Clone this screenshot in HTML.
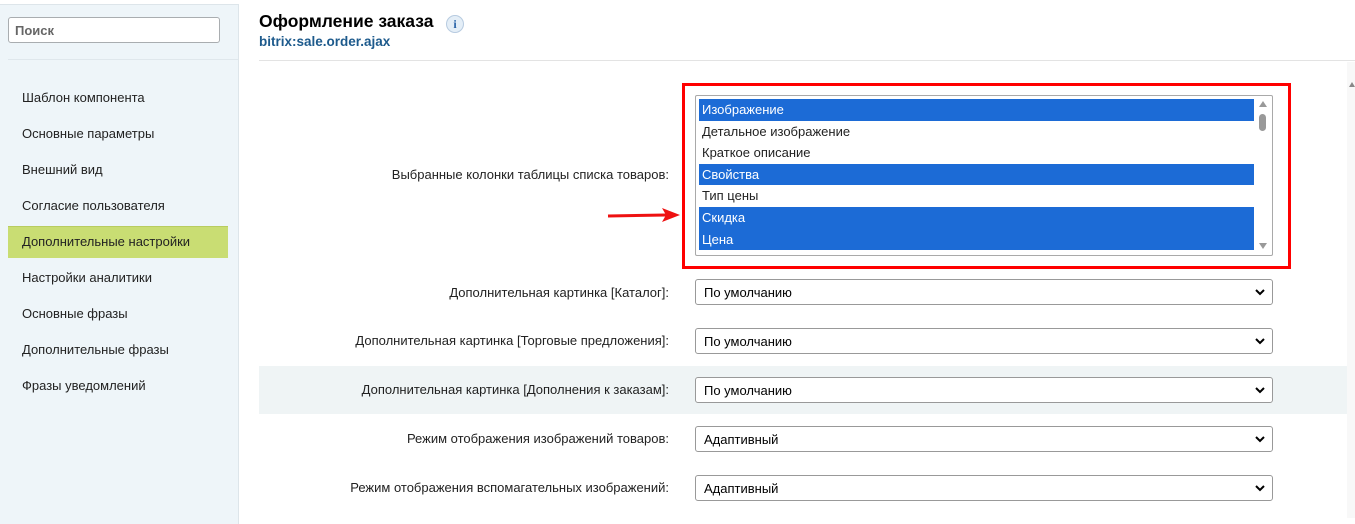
<!DOCTYPE html>
<html><head><meta charset="utf-8"><style>
*{box-sizing:border-box;margin:0;padding:0}
body{width:1355px;height:518px;overflow:hidden;background:#fff;font-family:"Liberation Sans",Arial,sans-serif;font-size:13px;color:#000;position:relative}
.side{position:absolute;left:0;top:4px;width:239px;height:520px;background:#eef5f9;border-right:1px solid #dde5ea;border-top:1px solid #dde5ea}
.search{position:absolute;left:8px;top:12px;width:212px;height:26px;background:#fff;border:1px solid #a9adb0;border-radius:3px;font-size:13px;color:#666;padding:5px 6px;font-weight:bold}
.sdiv{position:absolute;left:8px;top:54px;width:230px;height:1px;background:#dfe7ec}
.mi{position:absolute;left:22px;font-size:13px;color:#222}
.hl{position:absolute;left:8px;top:221px;width:220px;height:32px;background:#c9dd73;border-top:1px solid #b8cc60}
.abs{position:absolute}
.lbl{position:absolute;right:686px;font-size:13px;color:#222;white-space:nowrap}
.sel{position:absolute;left:695px;width:578px;height:26px;border:1px solid #999;border-radius:3px;background:#fff;padding:5px 8px;font-size:13px}
.sel svg{position:absolute;right:7px;top:8px}
.opt{height:21.6px;line-height:21.6px;padding-left:3px;font-size:13px;color:#222}
.on{background:#1c6bd6;color:#fff}
</style></head><body>
<div class="side">
<div class="search">Поиск</div>
<div class="sdiv"></div>
<div class="hl"></div>
<div class="mi" style="top:85px">Шаблон компонента</div>
<div class="mi" style="top:121px">Основные параметры</div>
<div class="mi" style="top:157px">Внешний вид</div>
<div class="mi" style="top:193px">Согласие пользователя</div>
<div class="mi" style="top:229px">Дополнительные настройки</div>
<div class="mi" style="top:265px">Настройки аналитики</div>
<div class="mi" style="top:301px">Основные фразы</div>
<div class="mi" style="top:337px">Дополнительные фразы</div>
<div class="mi" style="top:373px">Фразы уведомлений</div>
</div>
<div class="abs" style="left:259px;top:11px;font-size:17.5px;font-weight:bold;color:#000">Оформление заказа</div>
<div class="abs" style="left:446px;top:15px;width:18px;height:18px;border-radius:50%;background:#e4eef7;border:1px solid #b7cbe0;color:#2a64a8;font:bold 12px 'Liberation Serif',serif;text-align:center;line-height:16px">i</div>
<div class="abs" style="left:259px;top:34px;font-size:13.5px;font-weight:bold;color:#1d5a8c">bitrix:sale.order.ajax</div>
<div class="abs" style="left:259px;top:60px;width:1096px;height:1px;background:#e3e3e3"></div>
<div class="abs" style="left:1347px;top:62px;width:8px;height:456px;background:#f8f8f8"></div>
<div class="abs" style="left:1349px;top:82px;width:0;height:0;border-left:3px solid transparent;border-right:3px solid transparent;border-bottom:5px solid #888"></div>
<div class="abs" style="left:259px;top:366px;width:1088px;height:48px;background:#eff4f5"></div>

<div class="lbl" style="top:167px">Выбранные колонки таблицы списка товаров:</div>
<div class="abs" style="left:682px;top:83px;width:609px;height:186px;border:3px solid #f00"></div>
<div class="abs" style="left:695px;top:95px;width:578px;height:161px;border:1px solid #a9a9a9;border-radius:2px;background:#fff;padding:3px 18px 0 3px">
<div class="opt on">Изображение</div>
<div class="opt">Детальное изображение</div>
<div class="opt">Краткое описание</div>
<div class="opt on">Свойства</div>
<div class="opt">Тип цены</div>
<div class="opt on">Скидка</div>
<div class="opt on">Цена</div>
<div class="abs" style="right:5px;top:5px;border-left:4px solid transparent;border-right:4px solid transparent;border-bottom:6px solid #999"></div>
<div class="abs" style="right:6px;top:18px;width:7px;height:17px;border-radius:4px;background:#999"></div>
<div class="abs" style="right:5px;bottom:6px;border-left:4px solid transparent;border-right:4px solid transparent;border-top:6px solid #999"></div>
</div>
<svg class="abs" style="left:606px;top:207px" width="76" height="16"><line x1="2" y1="9" x2="60" y2="8" stroke="#e11" stroke-width="3"/><polygon points="56,1 74,8 56,15 60,8" fill="#e11"/></svg>

<div class="lbl" style="top:285px">Дополнительная картинка [Каталог]:</div>
<div class="sel" style="top:279px">По умолчанию<svg width="10" height="8"><path d="M1 2L5 6L9 2" stroke="#000" stroke-width="2" fill="none"/></svg></div>
<div class="lbl" style="top:333px">Дополнительная картинка [Торговые предложения]:</div>
<div class="sel" style="top:328px">По умолчанию<svg width="10" height="8"><path d="M1 2L5 6L9 2" stroke="#000" stroke-width="2" fill="none"/></svg></div>
<div class="lbl" style="top:382px">Дополнительная картинка [Дополнения к заказам]:</div>
<div class="sel" style="top:377px">По умолчанию<svg width="10" height="8"><path d="M1 2L5 6L9 2" stroke="#000" stroke-width="2" fill="none"/></svg></div>
<div class="lbl" style="top:431px">Режим отображения изображений товаров:</div>
<div class="sel" style="top:426px">Адаптивный<svg width="10" height="8"><path d="M1 2L5 6L9 2" stroke="#000" stroke-width="2" fill="none"/></svg></div>
<div class="lbl" style="top:480px">Режим отображения вспомагательных изображений:</div>
<div class="sel" style="top:475px">Адаптивный<svg width="10" height="8"><path d="M1 2L5 6L9 2" stroke="#000" stroke-width="2" fill="none"/></svg></div>
</body></html>
